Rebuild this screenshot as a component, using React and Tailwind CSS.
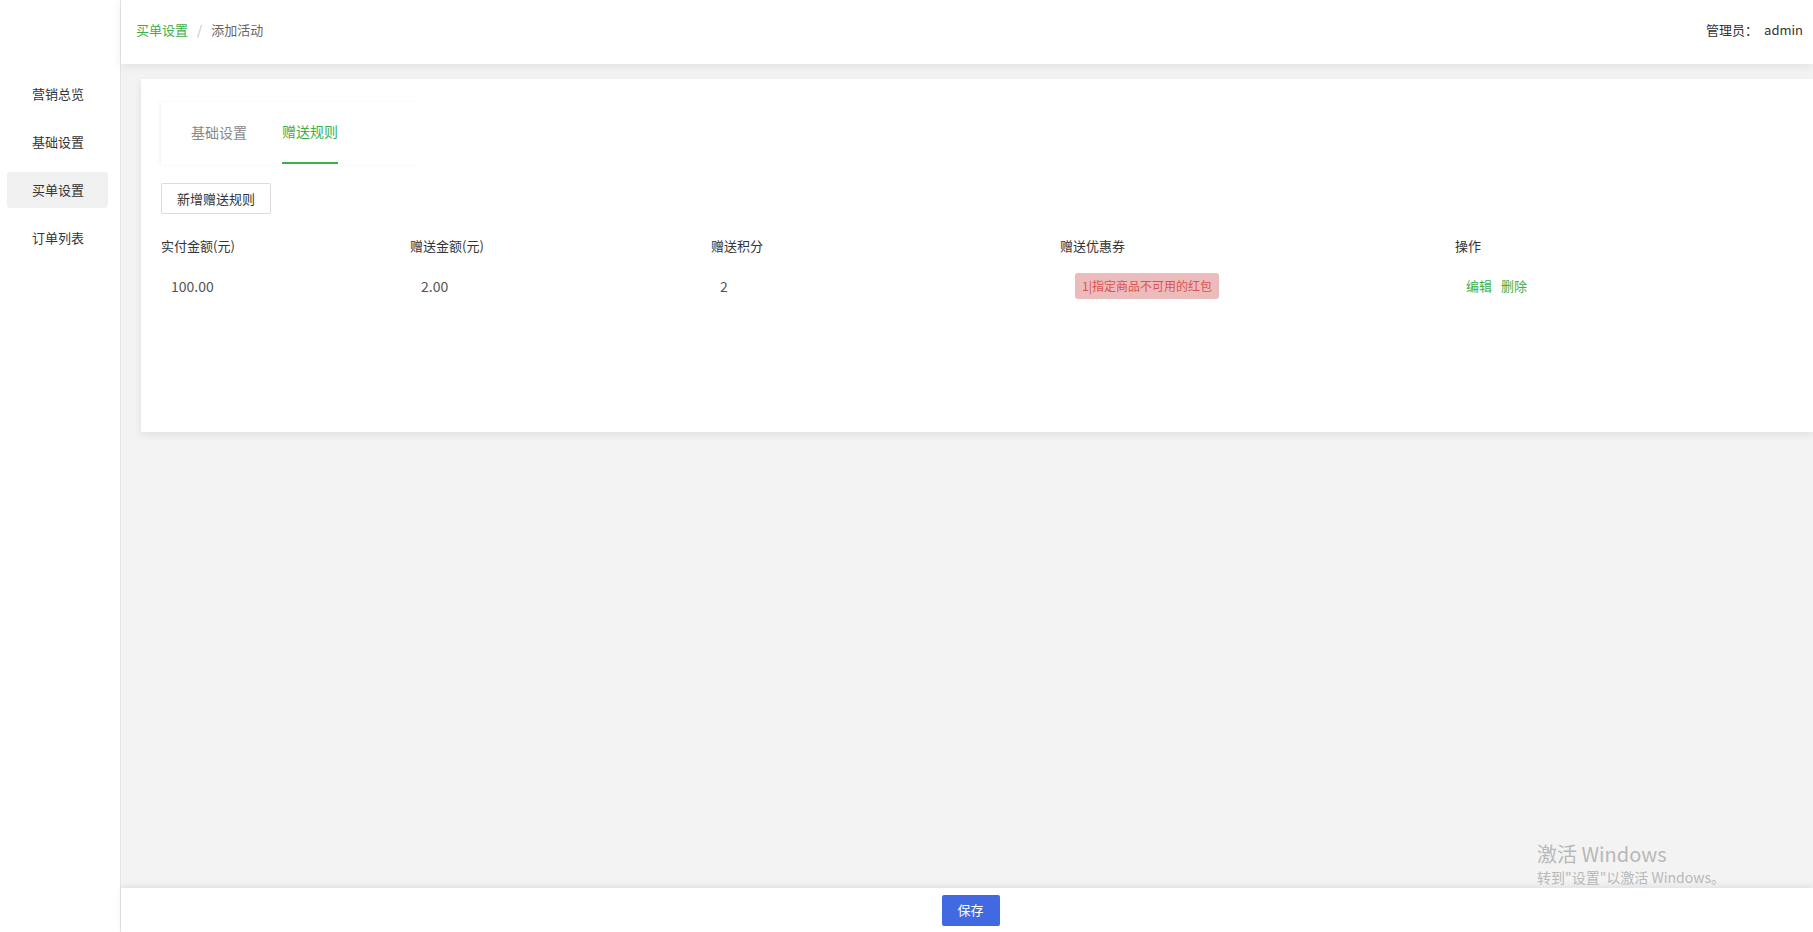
import React from 'react';

const NAV = ['营销总览', '基础设置', '买单设置', '订单列表'];

const COLS = ['实付金额(元)', '赠送金额(元)', '赠送积分', '赠送优惠券', '操作'];

const RULES = [
  { pay: '100.00', give: '2.00', points: '2', coupon: '1|指定商品不可用的红包' },
];

export default function App() {
  return (
    <div
      className="relative flex h-[932px] w-full overflow-hidden bg-white text-[13px] text-[#333]"
      style={{ fontFamily: '"Noto Sans CJK SC", "Noto Sans", sans-serif' }}
    >
      {/* sidebar */}
      <aside className="w-[121px] shrink-0 border-r border-[#e4e4e4] bg-white pt-[76px] shadow-[1px_0_3px_rgba(0,0,0,0.05)]">
        <ul className="flex flex-col gap-3 pl-[7px] pr-[12px]">
          {NAV.map((item) => (
            <li
              key={item}
              className={`flex h-9 items-center rounded pl-[25px] ${
                item === '买单设置' ? 'bg-[#f0f0f0]' : ''
              }`}
            >
              {item}
            </li>
          ))}
        </ul>
      </aside>

      <div className="flex min-w-0 flex-1 flex-col">
        {/* header */}
        <header className="relative z-10 flex h-16 shrink-0 items-center justify-between bg-white pl-[15px] pr-[10px] shadow-[0_2px_10px_rgba(0,0,0,0.08)]">
          <div className="flex items-center gap-[9px] pb-[4px]">
            <span className="text-[#3cb04a]">买单设置</span>
            <span className="text-[#c0c0c0]">/</span>
            <span className="text-[#666]">添加活动</span>
          </div>
          <div className="flex items-center pb-[4px] text-[#333]">
            <span>管理员：</span>
            <span className="ml-[6px]">admin</span>
          </div>
        </header>

        {/* main */}
        <main className="flex-1 bg-[#f3f3f3] pl-5 pt-[15px]">
          <div className="h-[353px] bg-white px-5 pt-[23px] shadow-[0_3px_8px_rgba(0,0,0,0.08)]">
            <div className="flex h-[63px] w-[260px] items-start gap-[35px] pl-[30px] shadow-[-2px_0_3px_rgba(0,0,0,0.04)]">
              <button className="h-[62px] pb-[21px] pt-[19px] text-[14px] leading-[20px] text-[#888]">
                基础设置
              </button>
              <button className="h-[62px] border-b-2 border-[#3cb04a] pb-[21px] pt-[19px] text-[14px] leading-[20px] text-[#3cb04a]">
                赠送规则
              </button>
            </div>

            <button className="mt-[18px] h-[31px] rounded-[2px] border border-[#dcdcdc] px-[15px] text-[#333]">
              新增赠送规则
            </button>

            <div className="mt-[21px] grid grid-cols-[249px_301px_349px_395px_1fr]">
              {COLS.map((c) => (
                <div key={c} className="flex h-[22px] items-center">
                  {c}
                </div>
              ))}
              {RULES.map((r) => (
                <React.Fragment key={r.pay}>
                  <div className="flex h-[58px] items-center pl-[10px] text-[14px] text-[#555]">{r.pay}</div>
                  <div className="flex h-[58px] items-center pl-[11px] text-[14px] text-[#555]">{r.give}</div>
                  <div className="flex h-[58px] items-center pl-[9px] text-[14px] text-[#555]">{r.points}</div>
                  <div className="flex h-[58px] items-center pl-[15px]">
                    <span className="rounded-[3px] bg-[#ecbcbd] px-[7px] py-[4px] text-[12px] text-[#d9534f]">
                      {r.coupon}
                    </span>
                  </div>
                  <div className="flex h-[58px] items-center gap-[9px] pl-[11px] text-[#3cb04a]">
                    <span>编辑</span>
                    <span>删除</span>
                  </div>
                </React.Fragment>
              ))}
            </div>
          </div>
        </main>

        {/* footer */}
        <footer className="relative z-10 flex h-[44px] shrink-0 items-center justify-center bg-white shadow-[0_-2px_6px_rgba(0,0,0,0.08)]">
          <button className="ml-[7px] h-[31px] w-[58px] rounded-[2px] bg-[#4169e1] text-white">保存</button>
        </footer>
      </div>

      {/* windows activation watermark */}
      <div className="pointer-events-none absolute left-[1537px] top-[841px] z-20 text-[#b8b8b8]">
        <div className="text-[20px] leading-[26px]">激活 Windows</div>
        <div className="text-[14px] leading-[20px]">转到"设置"以激活 Windows。</div>
      </div>
    </div>
  );
}
